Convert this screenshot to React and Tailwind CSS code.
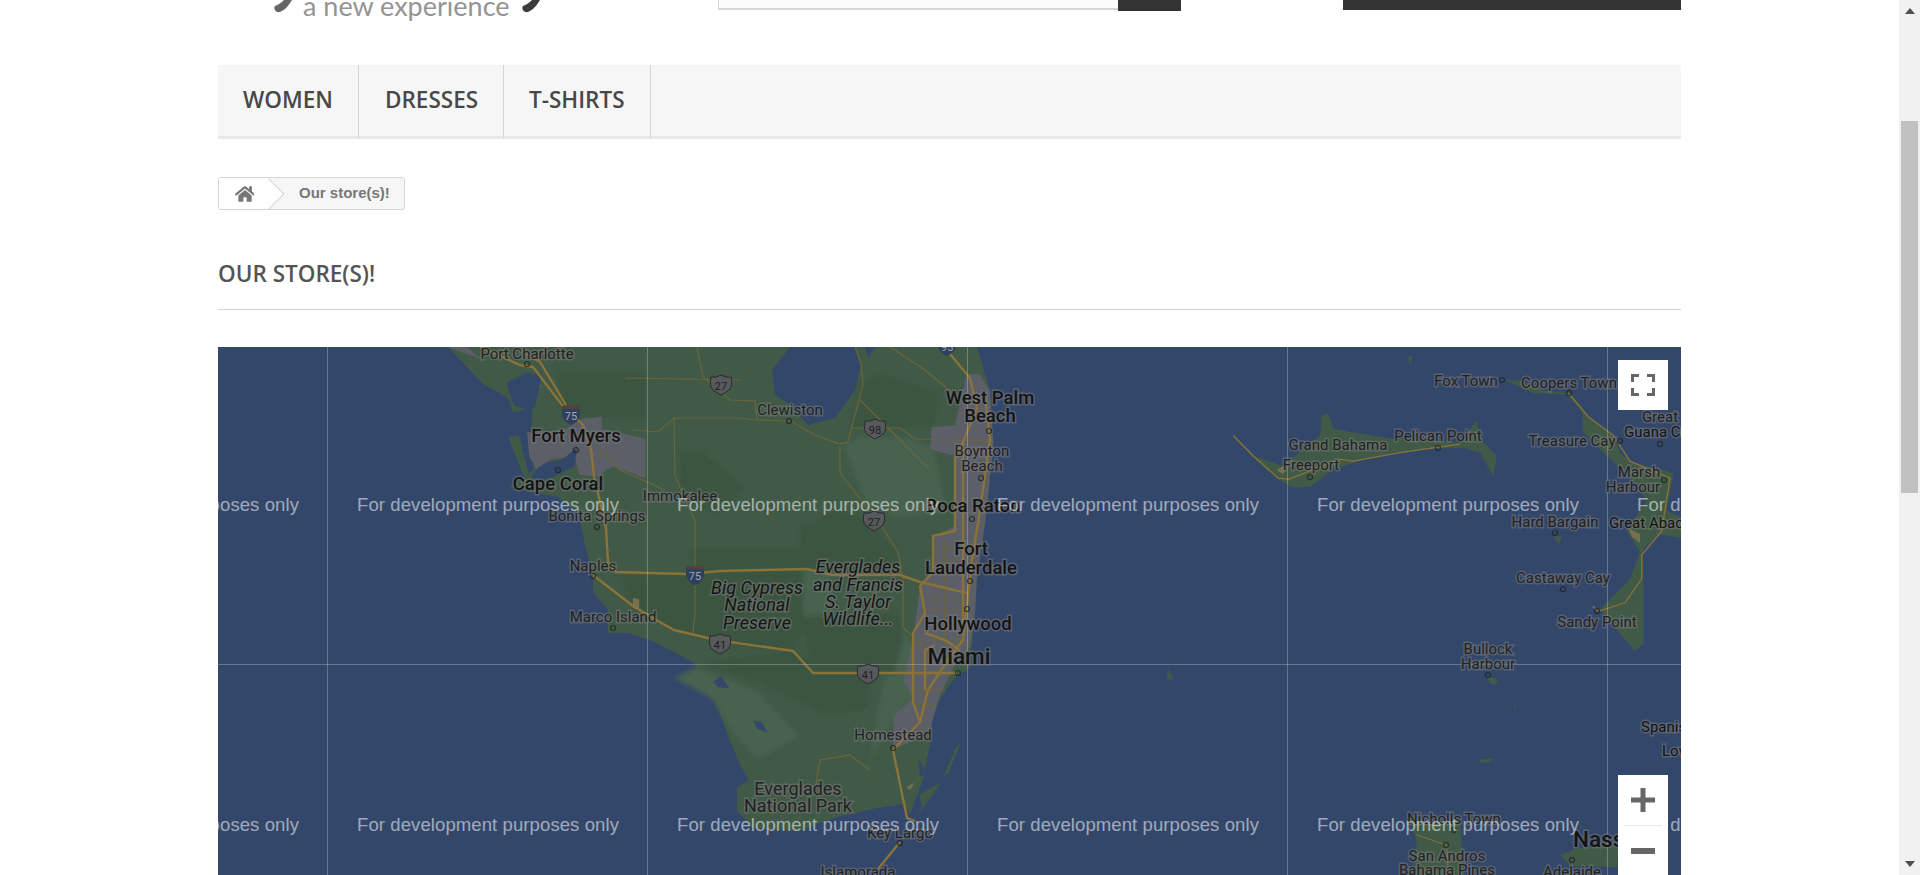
import React from 'react';
import { FaHome } from 'react-icons/fa';

// map shapes are read off the crops of the reference, so convert them to page space
const z3 = (pts) => pts.map(([x, y]) => `${218 + x / 2.41},${340 + y / 2.93}`).join(' ');
const z4 = (pts) => pts.map(([x, y]) => `${800 + x / 3},${340 + y / 2.93}`).join(' ');
const z5 = (pts) => pts.map(([x, y]) => `${1200 + x / 3},${340 + y / 2.93}`).join(' ');

const LAND = '#405a47';
const DARK = '#3b5440';
const LIGHT = '#46624f';
const CITY = '#5b5f67';
const WATER = '#33476b';
const TAN = '#77704f';
const HIGHWAY = '#8a7238';
const MINOR = '#6b6539';

const florida = '448,347 467,367 483,384 508,398 513,412 533,408 531,429 535,453 533,470 508,487 558,497 579,514 585,545 593,575 593,592 608,610 608,633 629,633 650,640 678,654 695,664 703,688 716,702 728,736 741,767 749,780 737,787 737,811 753,828 799,831 833,818 877,808 903,804 910,814 923,780 930,743 933,712 947,688 957,676 970,668 975,613 977,579 987,511 993,442 990,391 977,347';

const darkPatches = [
  z3([[815, 95], [1030, 95], [1030, 225], [925, 225], [880, 230], [830, 190]]),
  z3([[970, 690], [1130, 690], [1410, 675], [1410, 840], [1390, 912], [1240, 895], [1100, 850], [1060, 825], [1000, 770]]),
  z3([[1140, 610], [1410, 610], [1410, 670], [1150, 680]]),
  z3([[1110, 320], [1170, 330], [1270, 430], [1200, 510], [1120, 470]]),
  z3([[1430, 940], [1568, 950], [1568, 1080], [1470, 1100], [1300, 1000], [1150, 950], [1250, 930], [1390, 915]]),
  z4([[0, 540], [40, 540], [90, 500], [190, 520], [290, 620], [300, 680], [0, 670]]),
  z4([[0, 810], [100, 810], [290, 800], [310, 880], [280, 980], [40, 975]]),
  z4([[185, 130], [240, 100], [420, 150], [400, 250], [300, 258], [150, 258]]),
];
const lightPatches = [
  z3([[1410, 610], [1480, 610], [1480, 810], [1410, 810]]),
  z4([[130, 310], [190, 280], [340, 290], [400, 320], [440, 500], [300, 520], [200, 480]]),
  z4([[280, 870], [310, 850], [340, 900], [340, 1050], [270, 1130], [210, 1230], [240, 1060]]),
  z3([[1100, 990], [1150, 960], [1300, 1030], [1400, 1160], [1300, 1230], [1240, 1150], [1190, 1050]]),
];
const cities = [
  z3([[745, 270], [830, 265], [880, 230], [925, 225], [925, 260], [1030, 290], [1030, 405], [950, 370], [915, 400], [870, 395], [860, 340], [800, 350], [770, 385], [750, 340]]),
  z4([[395, 255], [465, 250], [500, 100], [540, 100], [570, 150], [580, 300], [560, 500], [530, 700], [525, 800], [510, 900], [460, 960], [420, 1040], [390, 1140], [350, 1170], [280, 1200], [280, 1100], [340, 1050], [310, 1000], [340, 870], [360, 720], [400, 680], [400, 575], [465, 545], [465, 340], [390, 320]]),
  z3([[555, 21], [600, 21], [640, 60], [620, 50]]),
  z3([[740, 120], [770, 110], [780, 140], [750, 135]]),
];
const waters = [
  z3([[865, 315], [860, 370], [810, 400], [770, 415], [755, 400], [770, 375], [790, 360], [830, 350]]),
  z3([[695, 125], [745, 95], [780, 105], [765, 190], [755, 210], [712, 190]]),
  z3([[1195, 1000], [1212, 985], [1232, 1020], [1205, 1018]]),
  z3([[1290, 1115], [1310, 1120], [1325, 1150], [1300, 1140]]),
  z4([[355, 1225], [380, 1270], [360, 1280]]),
  '790,347 772,370 775,395 791,405 808,425 835,418 855,390 861,364 855,347',
  '865,347 875,347 868,358',
];
const tans = [
  z4([[320, 1310], [375, 1280], [345, 1295], [330, 1320]]),
  z3([[1000, 755], [1015, 760], [1015, 790], [1000, 785]]),
  z5([[1285, 550], [1320, 570], [1320, 595], [1295, 575]]),
  z5([[230, 380], [260, 365], [250, 395]]),
];

const highways = [
  [[533, 367], [562, 405], [583, 425], [591, 449], [594, 476], [606, 528], [608, 562], [616, 572], [687, 574], [720, 571], [807, 569], [832, 575], [900, 575], [920, 582], [967, 593]],
  [[593, 575], [633, 606], [658, 621], [674, 630], [716, 640], [793, 651], [813, 673], [957, 673]],
  [[950, 354], [970, 378], [977, 408], [963, 442], [955, 459], [955, 531], [933, 536], [933, 572], [920, 586], [925, 613], [913, 633], [913, 702], [920, 722], [893, 750], [907, 818], [915, 821]],
  [[985, 395], [990, 440], [980, 510], [972, 560], [963, 640], [950, 657], [928, 690], [920, 722]],
  [[963, 442], [963, 630]],
  [[900, 842], [878, 869]],
  [[480, 347], [520, 365], [533, 367]],
  [[515, 347], [540, 362], [566, 405]],
  [[925, 633], [945, 640], [960, 650]],
  [[925, 690], [925, 650], [935, 645]],
];
const minors = [
  [[697, 347], [703, 377], [730, 400], [755, 401], [757, 420], [791, 421], [815, 435], [840, 444], [848, 442], [863, 384], [861, 364], [855, 347]],
  [[840, 446], [840, 473], [880, 524], [898, 552], [903, 579], [903, 627], [923, 647]],
  [[633, 430], [658, 432], [674, 418], [737, 418], [757, 420]],
  [[674, 418], [675, 476], [695, 521], [695, 575], [695, 613], [693, 633]],
  [[852, 428], [900, 428], [915, 439], [993, 441]],
  [[600, 450], [620, 470], [665, 490]],
  [[625, 378], [740, 380]],
  [[870, 770], [850, 755], [820, 760], [815, 790]],
  [[890, 347], [925, 370], [955, 395]],
  [[860, 400], [930, 470]],
  // street grid of the east coast towns
  [[935, 550], [963, 550]], [[935, 560], [975, 560]], [[925, 600], [972, 600]], [[925, 610], [972, 610]], [[918, 640], [962, 640]], [[915, 690], [945, 690]], [[915, 705], [935, 705]],
  [[945, 540], [945, 660]], [[935, 590], [935, 640]], [[925, 650], [925, 720]],
];

const lands = [
  z5([[95, 278], [160, 340], [250, 370], [360, 280], [365, 220], [385, 215], [400, 260], [460, 270], [580, 290], [640, 290], [780, 300], [830, 235], [840, 290], [890, 340], [880, 400], [840, 330], [790, 315], [660, 320], [490, 350], [400, 380], [330, 430], [280, 432], [230, 405], [160, 345], [100, 285]]),
  z5([[910, 115], [960, 120], [1040, 150], [1110, 155], [1170, 230], [1240, 280], [1260, 330], [1300, 360], [1420, 390], [1400, 500], [1443, 520], [1443, 580], [1380, 570], [1330, 610], [1330, 700], [1330, 890], [1305, 912], [1260, 860], [1200, 790], [1290, 700], [1320, 620], [1280, 560], [1340, 470], [1290, 400], [1220, 340], [1150, 270], [1145, 210], [1100, 160], [1000, 155], [930, 125]]),
  z5([[625, 1390], [680, 1420], [780, 1400], [790, 1568], [640, 1568], [650, 1470]]),
  z5([[1080, 1510], [1130, 1490], [1254, 1480], [1254, 1545], [1110, 1540]]),
  z5([[860, 985], [895, 995], [885, 1010], [870, 1005]]),
  z5([[1060, 570], [1085, 575], [1078, 598], [1068, 590]]),
  z5([[835, 1230], [880, 1225], [870, 1238], [840, 1238]]),
  z5([[625, 50], [640, 45], [628, 75]]),
  z5([[940, 1060], [950, 1078], [943, 1075]]),
  z4([[1105, 965], [1122, 995], [1100, 995]]),
  z4([[470, 1190], [480, 1185], [445, 1270], [432, 1275]]),
  z4([[425, 1295], [360, 1330], [365, 1370], [340, 1410], [385, 1350]]),
  z3([[700, 285], [725, 280], [750, 400], [735, 395]]),
];

// text, x, y, size, weight, italic, anchor
const labels = [
  ['Port Charlotte', 527, 354, 15],
  ['Clewiston', 790, 410, 15],
  ['Fort Myers', 576, 436, 18.5, 500],
  ['Cape Coral', 558, 484, 18.5, 500],
  ['Immokalee', 680, 496, 15],
  ['Bonita Springs', 597, 516, 15],
  ['Naples', 593, 566, 15],
  ['Marco Island', 613, 617, 15],
  ['Big Cypress', 757, 587, 18, 400, true],
  ['National', 757, 604, 18, 400, true],
  ['Preserve', 757, 622, 18, 400, true],
  ['Everglades', 798, 788, 18],
  ['National Park', 798, 805, 18],
  ['West Palm', 990, 398, 18.5, 500],
  ['Beach', 990, 416, 18.5, 500],
  ['Boynton', 982, 451, 15],
  ['Beach', 982, 466, 15],
  ['Boca Raton', 973, 506, 18.5, 500],
  ['Fort', 971, 549, 18.5, 500],
  ['Lauderdale', 971, 568, 18.5, 500],
  ['Everglades', 858, 566, 18, 400, true],
  ['and Francis', 858, 584, 18, 400, true],
  ['S. Taylor', 858, 601, 18, 400, true],
  ['Wildlife...', 858, 618, 18, 400, true],
  ['Hollywood', 968, 624, 18.5, 500],
  ['Miami', 959, 656, 22.5, 500],
  ['Homestead', 893, 735, 15],
  ['Key Largo', 900, 833, 15],
  ['Islamorada', 858, 872, 15],
  ['Fox Town', 1466, 381, 15],
  ['Coopers Town', 1569, 383, 15],
  ['Great', 1660, 417, 15],
  ['Guana Cay', 1624, 432, 15, 400, false, 'start'],
  ['Treasure Cay', 1572, 441, 15],
  ['Pelican Point', 1438, 436, 15],
  ['Grand Bahama', 1338, 445, 15],
  ['Freeport', 1311, 465, 15],
  ['Marsh', 1639, 472, 15],
  ['Harbour', 1633, 487, 15],
  ['Hard Bargain', 1555, 522, 15],
  ['Great Abaco', 1609, 523, 15, 400, false, 'start'],
  ['Castaway Cay', 1563, 578, 15],
  ['Sandy Point', 1597, 622, 15],
  ['Bullock', 1488, 649, 15],
  ['Harbour', 1488, 664, 15],
  ['Spanish Wells', 1641, 727, 15, 400, false, 'start'],
  ['Lower Bogue', 1662, 751, 15, 400, false, 'start'],
  ['Nicholls Town', 1454, 819, 15],
  ['San Andros', 1447, 856, 15],
  ['Bahama Pines', 1447, 870, 15],
  ['Nassau', 1573, 839, 22.5, 500, false, 'start'],
  ['Adelaide', 1572, 872, 15],
];

const usShields = [['27', 721, 385], ['98', 875, 429], ['27', 874, 521], ['41', 720, 644], ['41', 868, 674]];
const interstates = [['75', 571, 415], ['75', 695, 575], ['95', 947, 346]];
const towns = [[527, 364], [789, 421], [576, 450], [558, 470], [597, 527], [593, 576], [613, 628], [989, 431], [981, 478], [972, 519], [970, 581], [967, 609], [958, 673], [893, 748], [900, 843], [1310, 477], [1438, 448], [1502, 380], [1569, 393], [1620, 441], [1660, 444], [1664, 480], [1555, 533], [1563, 589], [1597, 611], [1488, 675], [1446, 845], [1454, 830], [1572, 860]];

const GoogleMap = () => (
  <div className="relative h-[528px] w-full overflow-hidden bg-[#33476b]">
    <svg viewBox="218 347 1463 528" className="block h-full w-full">
      <defs>
        <filter id="soft"><feGaussianBlur stdDeviation="0.7" /></filter>
        <filter id="softer"><feGaussianBlur stdDeviation="2" /></filter>
      </defs>
      <g filter="url(#soft)">
        <polygon points={florida} fill={LAND} />
        {lands.map((p, i) => (
          <polygon key={i} points={p} fill={LAND} />
        ))}
      </g>
      <g filter="url(#softer)">
        {lightPatches.map((p, i) => (
          <polygon key={i} points={p} fill={LIGHT} />
        ))}
        {darkPatches.map((p, i) => (
          <polygon key={i} points={p} fill={DARK} />
        ))}
      </g>
      <g filter="url(#soft)">
        {cities.map((p, i) => (
          <polygon key={i} points={p} fill={CITY} />
        ))}
        {tans.map((p, i) => (
          <polygon key={i} points={p} fill={TAN} />
        ))}
        {waters.map((p, i) => (
          <polygon key={i} points={p} fill={WATER} />
        ))}
      </g>

      {minors.map((r, i) => (
        <polyline key={i} points={r.join(' ')} fill="none" stroke={MINOR} strokeWidth="1.2" />
      ))}
      {highways.map((r, i) => (
        <polyline key={i} points={r.join(' ')} fill="none" stroke={HIGHWAY} strokeWidth="2.4" />
      ))}
      <polyline points={z5([[100, 280], [160, 340], [235, 405], [265, 408], [300, 395], [420, 350], [460, 355], [600, 330], [780, 305]])} fill="none" stroke={HIGHWAY} strokeWidth="1.3" />
      <polyline points={z5([[1105, 155], [1165, 225], [1240, 280], [1290, 355], [1410, 405], [1385, 560], [1325, 630], [1325, 700], [1275, 770], [1195, 795], [1178, 780]])} fill="none" stroke={HIGHWAY} strokeWidth="1.3" />
      <polyline points={z5([[650, 1450], [740, 1480], [745, 1568]])} fill="none" stroke={HIGHWAY} strokeWidth="1" />

      {/* tile lines */}
      {[327, 647, 967, 1287, 1607].map((x) => (
        <line key={x} x1={x + 0.5} x2={x + 0.5} y1="347" y2="875" stroke="#ffffff" strokeOpacity="0.25" />
      ))}
      <line x1="218" x2="1681" y1="664.5" y2="664.5" stroke="#ffffff" strokeOpacity="0.25" />

      {towns.map(([x, y], i) => (
        <circle key={i} cx={x} cy={y} r="2.5" fill="none" stroke="#1f1f1f" strokeOpacity="0.75" strokeWidth="1.2" />
      ))}

      {usShields.map(([n, x, y], i) => (
        <g key={i}>
          <path d={`M${x - 10} ${y - 8}q5 1 10 -2q5 3 10 2q2 9 -2 13q-4 3 -8 5q-4 -2 -8 -5q-4 -4 -2 -13z`} fill="#58595c" stroke="#2a2a2a" strokeWidth="1" />
          <text x={x} y={y + 1} textAnchor="middle" dominantBaseline="central" fontSize="11" fill="#1e1e1e" className="[font-family:Roboto,sans-serif]">{n}</text>
        </g>
      ))}
      {interstates.map(([n, x, y], i) => (
        <g key={i}>
          <path d={`M${x - 9} ${y - 9}h18v10q-2 6 -9 9q-7 -3 -9 -9z`} fill="#2f3f5e" />
          <rect x={x - 9} y={y - 9} width="18" height="3" fill="#57403c" />
          <text x={x} y={y + 1} textAnchor="middle" dominantBaseline="central" fontSize="11" fill="#a0a7b5" className="[font-family:Roboto,sans-serif]">{n}</text>
        </g>
      ))}

      {labels.map(([t, x, y, size, weight, italic, anchor], i) => (
        <text
          key={i}
          x={x}
          y={y}
          textAnchor={anchor || 'middle'}
          dominantBaseline="central"
          fontSize={size}
          fontWeight={weight || 400}
          fontStyle={italic ? 'italic' : 'normal'}
          fill={weight ? '#141414' : '#222222'}
          stroke="#7c7c7c"
          strokeOpacity="0.5"
          strokeWidth="3"
          className="[font-family:Roboto,sans-serif] [paint-order:stroke]"
        >
          {t}
        </text>
      ))}

      {/* dev mode watermark */}
      {[504, 824].map((y) =>
        [37, 357, 677, 997, 1317, 1637].map((x) => (
          <text key={`${x}-${y}`} x={x} y={y} dominantBaseline="central" fontSize="18.5" letterSpacing="0.1" fill="#ffffff" fillOpacity="0.55" className="[font-family:'Liberation_Sans',Arial,sans-serif]">
            For development purposes only
          </text>
        ))
      )}
    </svg>

    <button className="absolute right-[13px] top-[13px] flex h-[50px] w-[50px] items-center justify-center bg-white">
      <svg width="24" height="22" viewBox="0 0 24 22" fill="none" stroke="#666666" strokeWidth="3">
        <path d="M1.5 8V1.5H8M16 1.5H22.5V8M22.5 14V20.5H16M8 20.5H1.5V14" />
      </svg>
    </button>
    <div className="absolute bottom-0 right-[13px] flex h-[100px] w-[50px] flex-col items-center bg-white">
      <button className="flex h-[50px] w-full items-center justify-center">
        <svg width="24" height="24" viewBox="0 0 24 24" fill="#666666"><path d="M9.5 0h5v9.5H24v5h-9.5V24h-5v-9.5H0v-5h9.5z" /></svg>
      </button>
      <div className="h-px w-[38px] bg-[#e6e6e6]" />
      <button className="flex h-[49px] w-full items-center justify-center">
        <svg width="24" height="6" viewBox="0 0 24 6" fill="#666666"><rect width="24" height="6" /></svg>
      </button>
    </div>
  </div>
);

const App = () => {
  return (
    <div className="flex h-[875px] overflow-hidden bg-white">
      <div className="min-w-0 flex-1 pl-[218px] pr-[218px]">
        {/* top of the header, page is scrolled */}
        <div className="flex h-[65px] items-start">
          <div className="relative h-[22px] w-[500px] overflow-hidden">
            <svg className="absolute left-[55px] top-0" width="20" height="13" viewBox="0 0 20 13" fill="#666666">
              <path d="M2 6c3-1 6-3 9-6h8c-3 5-7 10-12 12-4 1-7-3-5-6z" />
            </svg>
            <span className="absolute left-[85px] top-[-12px] text-[27px] leading-[36px] text-[#949494] [font-family:Lato,sans-serif]">a new experience</span>
            <svg className="absolute left-[303px] top-0" width="20" height="13" viewBox="0 0 20 13" fill="#3c3c3c">
              <path d="M2 6c3-1 6-3 9-6h8c-3 5-7 10-12 12-4 1-7-3-5-6z" />
            </svg>
          </div>
          <div className="flex">
            <div className="h-[10px] w-[400px] border-b-2 border-l border-[#d6d4d4] bg-[#fbfbfb]" />
            <div className="h-[11px] w-[63px] bg-[#333333]" />
          </div>
          <div className="ml-auto h-[10px] w-[338px] bg-[#333333]" />
        </div>

        <nav className="flex h-[74px] border-b-[3px] border-[#e9e9e9] bg-[#f6f6f6] text-[22.5px] font-semibold leading-[70px] text-[#484848] [font-family:'Open_Sans',sans-serif]">
          <a className="-mb-[3px] w-[141px] border-r border-[#d6d4d4] pl-[25px]">WOMEN</a>
          <a className="-mb-[3px] w-[145px] border-r border-[#d6d4d4] pl-[26px]">DRESSES</a>
          <a className="-mb-[3px] w-[147px] border-r border-[#d6d4d4] pl-[25px]">T-SHIRTS</a>
        </nav>

        <div className="mt-[38px] flex h-[33px] w-[187px] items-center overflow-hidden rounded-[3px] border border-[#d6d4d4] bg-[#f6f6f6]">
          <div className="relative flex h-full w-[50px] shrink-0 items-center bg-white pl-[16px] text-[#777777]">
            <FaHome className="text-[20px]" />
          </div>
          <div className="h-[22px] w-[22px] shrink-0 -translate-x-[11px] rotate-45 border-r border-t border-[#d6d4d4] bg-white" />
          <span className="ml-[8px] text-[15px] font-bold text-[#777777] [font-family:'Liberation_Sans',Arial,sans-serif]">Our store(s)!</span>
        </div>

        <h1 className="mt-[47px] h-[53px] border-b border-[#d6d4d4] text-[22.5px] font-semibold leading-[34px] text-[#555454] [font-family:'Open_Sans',sans-serif]">OUR STORE(S)!</h1>

        <div className="mt-[37px]">
          <GoogleMap />
        </div>
      </div>

      {/* scrollbar */}
      <div className="flex w-[21px] shrink-0 flex-col items-center bg-[#f1f1f1] pt-[8px] pb-[8px]">
        <svg width="10" height="6" viewBox="0 0 10 6" fill="#505050"><path d="M5 0l5 6H0z" /></svg>
        <div className="mt-[107px] h-[372px] w-[17px] bg-[#c1c1c1]" />
        <div className="flex-1" />
        <svg width="10" height="6" viewBox="0 0 10 6" fill="#505050"><path d="M0 0h10L5 6z" /></svg>
      </div>
    </div>
  );
};

export default App;
